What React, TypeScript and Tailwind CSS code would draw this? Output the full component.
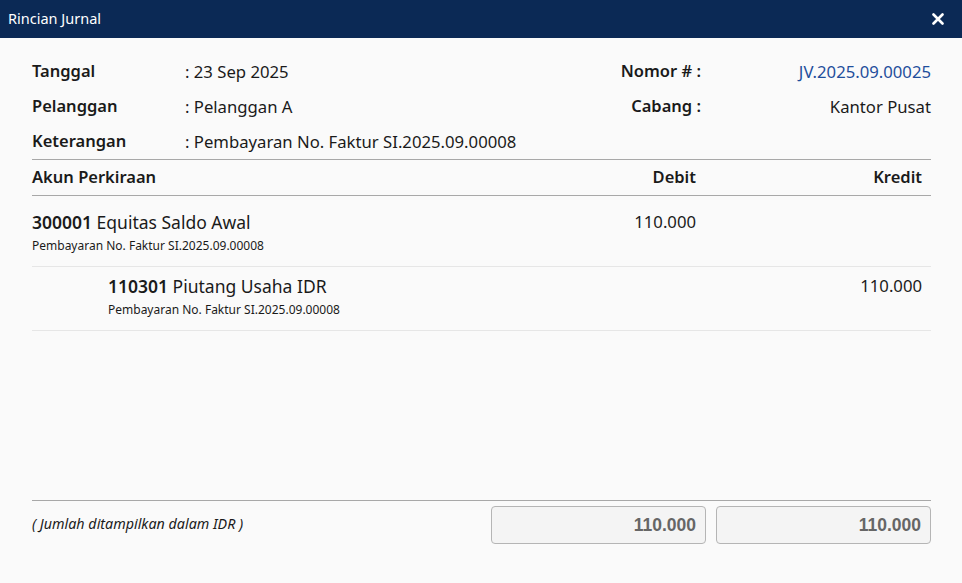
import React from "react";

const font = { fontFamily: '"Noto Sans", "Open Sans", sans-serif' };

export default function App() {
  return (
    <div className="w-[962px] h-[583px] bg-[#fafafa] flex flex-col text-[#1a1a1a]" style={font}>
      <div className="h-[38px] bg-[#0b2955] flex items-center justify-between pl-[8px] pr-[18px] text-white shrink-0">
        <span className="text-[14.5px]">Rincian Jurnal</span>
        <svg width="12" height="12" viewBox="0 0 12 12">
          <path d="M1.5 1.5 L10.5 10.5 M10.5 1.5 L1.5 10.5" stroke="white" strokeWidth="2.6" strokeLinecap="round" />
        </svg>
      </div>
      <div className="flex-1 flex flex-col pr-[31px] pl-[32px]">
        <div className="flex pt-[16px]">
          <div className="flex-1 flex flex-col">
            <div className="h-[35px] flex items-center text-[16.7px]">
              <span className="w-[153px] font-semibold text-[16.5px]">Tanggal</span>
              <span>: 23 Sep 2025</span>
            </div>
            <div className="h-[35px] flex items-center text-[16.7px]">
              <span className="w-[153px] font-semibold text-[16.5px]">Pelanggan</span>
              <span>: Pelanggan A</span>
            </div>
            <div className="h-[35px] flex items-center text-[16.7px]">
              <span className="w-[153px] font-semibold text-[16.5px]">Keterangan</span>
              <span>: Pembayaran No. Faktur SI.2025.09.00008</span>
            </div>
          </div>
          <div className="w-[400px] flex flex-col">
            <div className="h-[35px] flex items-center text-[16.7px]">
              <span className="w-[170px] text-right font-semibold text-[16.5px]">Nomor # :</span>
              <span className="flex-1 text-right text-[#1f4e9c]">JV.2025.09.00025</span>
            </div>
            <div className="h-[35px] flex items-center text-[16.7px]">
              <span className="w-[170px] text-right font-semibold text-[16.5px]">Cabang :</span>
              <span className="flex-1 text-right">Kantor Pusat</span>
            </div>
          </div>
        </div>
        <div className="border-t border-b border-[#a8a8a8] h-[37px] flex items-center text-[16.5px] font-semibold">
          <span className="flex-1">Akun Perkiraan</span>
          <span className="w-[215px] text-right pr-[10px]">Debit</span>
          <span className="w-[225px] text-right pr-[9px]">Kredit</span>
        </div>
        <div className="border-b border-[#e6e6e6] h-[71px] flex pt-[14px]">
          <div className="flex-1 flex flex-col">
            <span className="text-[17.5px] leading-[24px]"><span className="font-semibold">300001</span> Equitas Saldo Awal</span>
            <span className="text-[12px] leading-[16px] mt-[4px]">Pembayaran No. Faktur SI.2025.09.00008</span>
          </div>
          <span className="w-[215px] text-right pr-[10px] text-[16.7px] leading-[24px]">110.000</span>
          <span className="w-[225px] text-right pr-[9px] text-[16.7px] leading-[24px]"></span>
        </div>
        <div className="border-b border-[#e6e6e6] h-[64px] flex pt-[7px]">
          <div className="flex-1 flex flex-col pl-[76px]">
            <span className="text-[17.5px] leading-[24px]"><span className="font-semibold">110301</span> Piutang Usaha IDR</span>
            <span className="text-[12px] leading-[16px] mt-[4px]">Pembayaran No. Faktur SI.2025.09.00008</span>
          </div>
          <span className="w-[215px] text-right pr-[10px] text-[16.7px] leading-[24px]"></span>
          <span className="w-[225px] text-right pr-[9px] text-[16.7px] leading-[24px]">110.000</span>
        </div>
        <div className="flex-1" />
        <div className="border-t border-[#a8a8a8] flex items-start pt-[5px] pb-[39px]">
          <span className="flex-1 italic text-[14.3px] pt-[7px]">( Jumlah ditampilkan dalam IDR )</span>
          <div className="w-[215px] h-[38px] rounded-[4px] border border-[#b5b5b5] bg-[#f4f4f4] flex items-center justify-end pr-[9px] text-[17.5px] font-bold text-[#666]" style={{ fontFamily: '"Liberation Sans", Arial, sans-serif' }}>110.000</div>
          <div className="w-[215px] h-[38px] ml-[10px] rounded-[4px] border border-[#b5b5b5] bg-[#f4f4f4] flex items-center justify-end pr-[9px] text-[17.5px] font-bold text-[#666]" style={{ fontFamily: '"Liberation Sans", Arial, sans-serif' }}>110.000</div>
        </div>
      </div>
    </div>
  );
}
